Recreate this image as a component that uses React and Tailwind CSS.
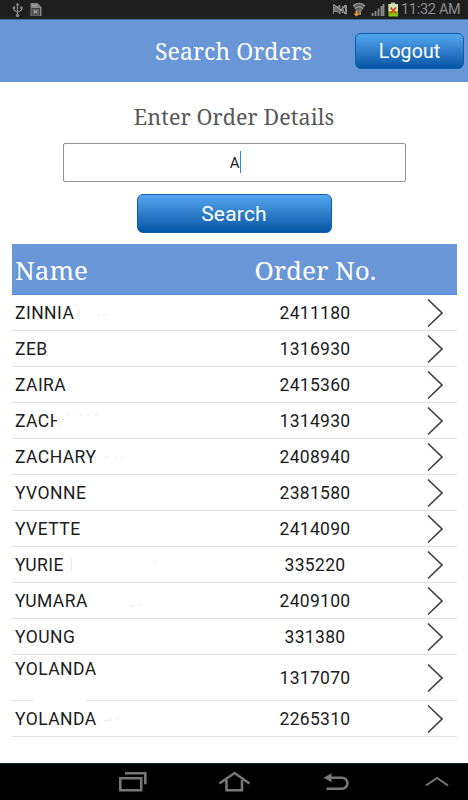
const SERIF = "font-['Droid_Serif','Noto_Serif','DejaVu_Serif_Condensed','DejaVu_Serif',serif] [font-stretch:condensed]";

const orders = [
  { name: 'ZINNIA', no: '2411180', trace: 'M67 15v6M86 20h2M91 20h2M95 20h2' },
  { name: 'ZEB', no: '1316930' },
  { name: 'ZAIRA', no: '2415360' },
  { name: 'ZACH', no: '1314930', clipped: true, trace: 'M55 13l2-2M67 13l2-2 2 2M75 12h2M83 12h3' },
  { name: 'ZACHARY', no: '2408940', trace: 'M93 19l3-2M103 19h2M108 19h2' },
  { name: 'YVONNE', no: '2381580' },
  { name: 'YVETTE', no: '2414090' },
  { name: 'YURIE', no: '335220', trace: 'M59.500 11v13M142 15l3-3' },
  { name: 'YUMARA', no: '2409100', trace: 'M118 23h5M127 22h3' },
  { name: 'YOUNG', no: '331380' },
  { name: 'YOLANDA', no: '1317070', tall: true },
  { name: 'YOLANDA', no: '2265310', trace: 'M92 20l5-1h3M104 18l3-1' },
];

function StatusBar() {
  return (
    <div className="flex h-[19px] items-center justify-between bg-[#1e1e1e] text-[#8c8c8c]">
      <svg width="50" height="19" fill="none" stroke="#888" strokeWidth="1">
        <path d="M17.5 4v12M14 7v3l3.500 2.500M21.500 7v3l-4 2.500" strokeWidth="1.200" />
        <path d="M17.500 2.500l2 3h-4z" fill="#888" stroke="none" />
        <circle cx="17.500" cy="15.500" r="1.700" fill="#888" stroke="none" />
        <rect x="12.800" y="6.500" width="2.400" height="2.400" fill="#888" stroke="none" />
        <rect x="20.300" y="6.500" width="2.400" height="2.400" fill="#888" stroke="none" />
        <path d="M30.500 3h7l4 4v9h-11z" fill="#858585" stroke="none" />
        <rect x="32" y="8.500" width="7.500" height="6.500" fill="#656565" stroke="#3c3c3c" />
        <rect x="34" y="10.500" width="3" height="2.500" fill="#999" stroke="none" />
        <path d="M32 5.500h5" stroke="#aaa" />
      </svg>
      <div className="flex items-center">
        <svg width="70" height="19" fill="none">
          <path d="M2.500 5v9M15.500 5v9" stroke="#8c8c8c" strokeWidth="1" />
          <path d="M3 7h3l3-2v9l-3-2.500H3z" fill="#6c6c6c" stroke="#999" strokeWidth=".7" />
          <path d="M2.500 4.500l13 9.500M11 6c1.500 2 1.500 5 0 7M13.500 5c1.500 3 1.500 6 0 9M9 11l6-6" stroke="#999" strokeWidth="1.100" />
          <path d="M22 6c3.500-3.700 8.500-3.700 12 0l-6 9z" fill="#5c5c5c" />
          <path d="M22 6c3.500-3.700 8.500-3.700 12 0M24 8.500c2.500-2 5.500-2 8 0" stroke="#a0a0a0" strokeWidth="1.200" />
          <path d="M28 15V9.500h2V15z" fill="#888" />
          <path d="M24.500 10.500h2v3h2l-3 3-3-3h2z" fill="#f5a02b" />
          <path d="M41.500 16v-3M44.500 16v-5M47.500 16V8.500M50.500 16V6M52.500 16V4" stroke="#8b8b8b" strokeWidth="1.800" />
          <rect x="60" y="2.500" width="4" height="2" fill="#b7c49a" />
          <rect x="57.500" y="4" width="9.500" height="12.500" fill="#84c610" />
          <rect x="57.500" y="4" width="9.500" height="7" fill="#d3e4ba" />
          <path d="M59.500 7.500l5.500 6M65 7.500l-5.500 6" stroke="#e43b22" strokeWidth="1.700" />
        </svg>
        <span className="w-[67px] whitespace-nowrap text-[14.5px] leading-[20px] tracking-[-0.3px]">11:32 AM</span>
      </div>
    </div>
  );
}

function BlueButton({ children, className }) {
  return (
    <button
      className={
        'flex items-center justify-center rounded-[6px] border border-[#0c5dad] bg-linear-to-b from-[#54a6ef] to-[#0056a5] text-white ' +
        className
      }
    >
      {children}
    </button>
  );
}

function OrderRow({ order }) {
  return (
    <div className={'relative flex items-center border-b border-[#e3e3e3] pl-[3.5px] pr-[14px] ' + (order.tall ? 'h-[46px]' : 'h-9')}>
      {order.trace && (
        <svg className="absolute left-0 top-0" width="160" height="35" fill="none" stroke="#e9e9e9" strokeWidth="1">
          <path d={order.trace} />
        </svg>
      )}
      {order.tall && <span className="absolute -bottom-px left-[21px] h-px w-[53px] bg-white" />}
      <div className={'w-[238.5px] pt-px text-[17.5px] leading-5 tracking-[0.45px] text-[#1c1c1c] ' + (order.tall ? 'mb-[18px]' : '')}>
        <span className={order.clipped ? 'inline-block [clip-path:inset(0_5.5px_0_0)]' : 'inline-block'}>{order.name}</span>
      </div>
      <div className="w-[123px] pt-px text-center text-[17.5px] leading-5 tracking-[0.3px] text-[#1c1c1c]">{order.no}</div>
      <svg className="ml-auto" width="16" height="30" fill="none" stroke="#444" strokeWidth="1.700">
        <path d="M1 1.500l14 13.500-14 13.500" />
      </svg>
    </div>
  );
}

function NavBar() {
  return (
    <div className="flex h-[37px] border-t border-[#082028] bg-black">
      <svg width="468" height="36" fill="none" stroke="#777" strokeWidth="2.600">
        <path d="M120.300 14.300h20.900v11.900h-20.900zM125 9.300h20.300v11" />
        <path d="M219.500 19.500l15-10.500 15 10.500M226.500 16v10.200h15.500V16" />
        <path d="M331 13.800h11a5.400 5.400 0 0 1 0 10.900h-15.500" />
        <path d="M323.500 13.800l8-4.500v9z" fill="#777" stroke="none" />
        <path d="M426 21.500l11-7.500 11 7.500" strokeWidth="2" />
      </svg>
    </div>
  );
}

export default function App() {
  return (
    <div className="flex h-[800px] w-[468px] flex-col overflow-hidden bg-white font-[Roboto,sans-serif] text-black">
      <StatusBar />
      <header className="flex h-[63px] items-start border-t border-[#4b6c99] bg-[#6896d6]">
        <h1 className={'ml-[155px] mt-[16px] w-[200px] whitespace-nowrap text-[23px] leading-[30px] tracking-[0.1px] text-white ' + SERIF}>Search Orders</h1>
        <BlueButton className="mt-[13px] h-[36px] w-[109px] pt-0.5 text-[19.5px] tracking-[0.1px]">Logout</BlueButton>
      </header>
      <main className="flex flex-1 flex-col items-center">
        <h2 className={'mt-[20px] whitespace-nowrap text-[21.5px] leading-[30px] tracking-[0.1px] text-[#585858] ' + SERIF}>Enter Order Details</h2>
        <div className="mt-[11px] flex h-[39px] w-[343px] items-center rounded-[2px] border border-[#929292] text-[15px] text-[#1c1c1c]">
          <span className="w-[176px] pt-0.5 text-right">A</span>
          <span className="mb-[2px] h-[22px] w-px bg-[#2292df]" />
        </div>
        <BlueButton className="mt-3 h-[39px] w-[195px] pt-0.5 text-[21px] tracking-[0.2px]">Search</BlueButton>
        <section className="mt-[11px] w-[445px]">
          <div className={'flex h-[51px] items-center border-b border-[#478ad9] bg-[#6896d6] pl-[3.5px] pt-0.5 text-[26px] text-white ' + SERIF}>
            <span className="w-[239.5px]">Name</span>
            <span className="whitespace-nowrap">Order No.</span>
          </div>
          {orders.map((order) => (
            <OrderRow key={order.no} order={order} />
          ))}
        </section>
      </main>
      <NavBar />
    </div>
  );
}
